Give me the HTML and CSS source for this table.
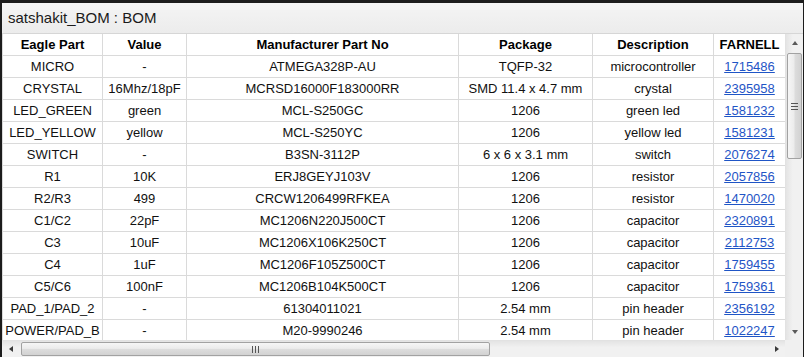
FILE: index.html
```html
<!DOCTYPE html>
<html>
<head>
<meta charset="utf-8">
<link rel="stylesheet" href="styles.css">
</head>
<body>
<div class="window">
  <div class="title">satshakit_BOM : BOM</div>
  <div class="pane">
    <div class="viewport">
      <table class="bom">
        <colgroup>
          <col class="c1"><col class="c2"><col class="c3"><col class="c4"><col class="c5"><col class="c6">
        </colgroup>
        <thead>
          <tr><th>Eagle Part</th><th>Value</th><th>Manufacturer Part No</th><th>Package</th><th>Description</th><th>FARNELL</th></tr>
        </thead>
        <tbody>
          <tr><td>MICRO</td><td>-</td><td>ATMEGA328P-AU</td><td>TQFP-32</td><td>microcontroller</td><td><a href="#">1715486</a></td></tr>
          <tr><td>CRYSTAL</td><td>16Mhz/18pF</td><td>MCRSD16000F183000RR</td><td>SMD 11.4 x 4.7 mm</td><td>crystal</td><td><a href="#">2395958</a></td></tr>
          <tr><td>LED_GREEN</td><td>green</td><td>MCL-S250GC</td><td>1206</td><td>green led</td><td><a href="#">1581232</a></td></tr>
          <tr><td>LED_YELLOW</td><td>yellow</td><td>MCL-S250YC</td><td>1206</td><td>yellow led</td><td><a href="#">1581231</a></td></tr>
          <tr><td>SWITCH</td><td>-</td><td>B3SN-3112P</td><td>6 x 6 x 3.1 mm</td><td>switch</td><td><a href="#">2076274</a></td></tr>
          <tr><td>R1</td><td>10K</td><td>ERJ8GEYJ103V</td><td>1206</td><td>resistor</td><td><a href="#">2057856</a></td></tr>
          <tr><td>R2/R3</td><td>499</td><td>CRCW1206499RFKEA</td><td>1206</td><td>resistor</td><td><a href="#">1470020</a></td></tr>
          <tr><td>C1/C2</td><td>22pF</td><td>MC1206N220J500CT</td><td>1206</td><td>capacitor</td><td><a href="#">2320891</a></td></tr>
          <tr><td>C3</td><td>10uF</td><td>MC1206X106K250CT</td><td>1206</td><td>capacitor</td><td><a href="#">2112753</a></td></tr>
          <tr><td>C4</td><td>1uF</td><td>MC1206F105Z500CT</td><td>1206</td><td>capacitor</td><td><a href="#">1759455</a></td></tr>
          <tr><td>C5/C6</td><td>100nF</td><td>MC1206B104K500CT</td><td>1206</td><td>capacitor</td><td><a href="#">1759361</a></td></tr>
          <tr><td>PAD_1/PAD_2</td><td>-</td><td>61304011021</td><td>2.54 mm</td><td>pin header</td><td><a href="#">2356192</a></td></tr>
          <tr><td>POWER/PAD_B</td><td>-</td><td>M20-9990246</td><td>2.54 mm</td><td>pin header</td><td><a href="#">1022247</a></td></tr>
        </tbody>
      </table>
    </div>
    <div class="vscroll">
      <div class="btn"><span class="tri tri-up"></span></div>
      <div class="vthumb"><span class="vgrip"></span></div>
      <div class="fill"></div>
      <div class="btn"><span class="tri tri-down"></span></div>
    </div>
    <div class="hscroll">
      <div class="btn"><span class="tri tri-left"></span></div>
      <div class="hthumb"><span class="hgrip"></span></div>
      <div class="fill"></div>
      <div class="btn"><span class="tri tri-right"></span></div>
    </div>
    <div class="corner"></div>
  </div>
</div>
</body>
</html>
```

FILE: styles.css
```css
html, body {
  margin: 0;
  padding: 0;
  background: #ffffff;
}

.window {
  width: 804px;
  height: 357px;
  box-sizing: border-box;
  border-top: 3px solid #1c1c1c;
  border-left: 2px solid #1c1c1c;
  border-right: 1px solid #1c1c1c;
  background: #ffffff;
  display: flex;
  flex-direction: column;
  font-family: "Liberation Sans", Arial, sans-serif;
  color: #111;
  overflow: hidden;
}

.title {
  height: 30px;
  line-height: 30px;
  border-bottom: 1px solid #d6d6d6;
  background: linear-gradient(to bottom, #f4f4f4, #ececec);
  font-size: 15px;
  padding-left: 6px;
  color: #1a1a1a;
}

.pane {
  flex: 1;
  display: grid;
  grid-template-columns: 1fr 18px;
  grid-template-rows: 1fr 17px;
  min-height: 0;
}

.viewport {
  overflow: hidden;
  background: #fff;
}

.bom {
  border-collapse: collapse;
  table-layout: fixed;
  width: 783px;
  font-size: 13px;
}

.c1 { width: 100px; }
.c2 { width: 84px; }
.c3 { width: 272px; }
.c4 { width: 134px; }
.c5 { width: 121px; }
.c6 { width: 72px; }

.bom th,
.bom td {
  height: 21px;
  padding: 0 2px;
  border: 1px solid #dadada;
  text-align: center;
  vertical-align: middle;
  white-space: nowrap;
  overflow: hidden;
}

.bom tr:first-child th { border-top: none; }

.bom th {
  font-weight: bold;
  color: #000;
}

.bom td a {
  color: #1f55c6;
  text-decoration: underline;
}

.vscroll {
  display: flex;
  flex-direction: column;
  background: linear-gradient(to right, #e4e4e4, #f1f1f1 40%, #f1f1f1);
  border-left: 1px solid #e2e2e2;
}

.hscroll {
  display: flex;
  flex-direction: row;
  background: linear-gradient(to bottom, #e4e4e4, #f1f1f1 40%, #f1f1f1);
  border-top: 1px solid #e2e2e2;
}

.corner {
  background: #f0f0f0;
}

.btn {
  flex: 0 0 17px;
  height: 17px;
  display: flex;
  align-items: center;
  justify-content: center;
}

.hscroll .btn { height: auto; }

.fill { flex: 1; }

.tri {
  width: 0;
  height: 0;
  border-style: solid;
}

.tri-up {
  border-width: 0 3.5px 4px 3.5px;
  border-color: transparent transparent #5a5a5a transparent;
}

.tri-down {
  border-width: 4px 3.5px 0 3.5px;
  border-color: #5a5a5a transparent transparent transparent;
}

.tri-left {
  border-width: 3.5px 4px 3.5px 0;
  border-color: transparent #3a3a3a transparent transparent;
}

.tri-right {
  border-width: 3.5px 0 3.5px 4px;
  border-color: transparent transparent transparent #3a3a3a;
}

.vthumb {
  margin: 2px 1px 0 1px;
  height: 104px;
  border: 1px solid #a2a2a2;
  border-radius: 2px;
  background: linear-gradient(to right, #f6f6f6, #ececec 45%, #dcdcdc 55%, #d2d2d2);
  display: flex;
  align-items: center;
  justify-content: center;
}

.vgrip {
  width: 7px;
  height: 5px;
  border-top: 1px solid #555;
  border-bottom: 1px solid #555;
  background: linear-gradient(to bottom, transparent 2px, #555 2px, #555 3px, transparent 3px);
}

.hthumb {
  margin: 1px 0 1px 2px;
  width: 467px;
  border: 1px solid #a2a2a2;
  border-radius: 2px;
  background: linear-gradient(to bottom, #f6f6f6, #ececec 45%, #dcdcdc 55%, #d2d2d2);
  display: flex;
  align-items: center;
  justify-content: center;
}

.hgrip {
  width: 5px;
  height: 7px;
  border-left: 1px solid #555;
  border-right: 1px solid #555;
  background: linear-gradient(to right, transparent 2px, #555 2px, #555 3px, transparent 3px);
}
```
